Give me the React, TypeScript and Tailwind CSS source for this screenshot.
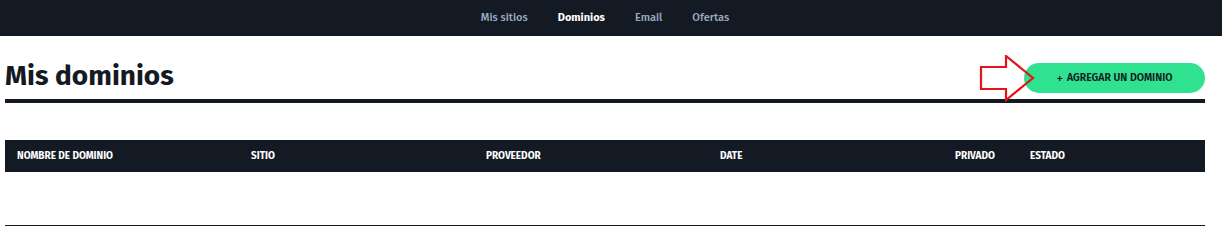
import React from "react";

const font = { fontFamily: '"Fira Sans", "Noto Sans", "Open Sans", sans-serif' };

export default function App() {
  return (
    <div className="w-[1222px] h-[233px] bg-white overflow-hidden" style={font}>
      <div className="h-[36px] bg-[#141a23]">
        <div className="ml-[5px] w-[1200px] h-full flex items-center justify-center text-[11px]">
          <a className="px-[15px] text-[#9aabc4] font-medium">Mis sitios</a>
          <a className="px-[15px] text-white font-bold">Dominios</a>
          <a className="px-[15px] text-[#9aabc4] font-medium">Email</a>
          <a className="px-[15px] text-[#9aabc4] font-medium">Ofertas</a>
        </div>
      </div>
      <div className="ml-[5px] w-[1200px]">
        <div className="relative flex items-end justify-between h-[67px] pb-[6px] border-b-4 border-[#141a23]">
          <h1 className="text-[28px] leading-[34px] font-bold text-[#141a23]">Mis dominios</h1>
          <button className="h-[30px] w-[181px] rounded-full bg-[#2ee28f] text-[#141a23] text-[10.5px] font-semibold flex items-center justify-center">
            <span className="mr-[4px] text-[13px] font-normal leading-none">+</span>AGREGAR UN DOMINIO
          </button>
          <svg className="absolute left-[974px] top-[19px]" width="60" height="48" viewBox="0 0 60 48">
            <polygon points="2,12 27,12 27,1 54,23 27,45 27,34 2,34" fill="none" stroke="#e3131b" strokeWidth="2.2" />
          </svg>
        </div>
        <div className="mt-[37px] h-[32px] bg-[#141a23] flex items-center text-white text-[10px] font-bold uppercase">
          <div className="w-[246px] pl-[12px]">Nombre de dominio</div>
          <div className="w-[235px]">Sitio</div>
          <div className="w-[234px]">Proveedor</div>
          <div className="w-[235px]">Date</div>
          <div className="w-[75px]">Privado</div>
          <div>Estado</div>
        </div>
        <div className="mt-[53px] w-[1200px] border-b border-[#141a23]"></div>
      </div>
    </div>
  );
}
